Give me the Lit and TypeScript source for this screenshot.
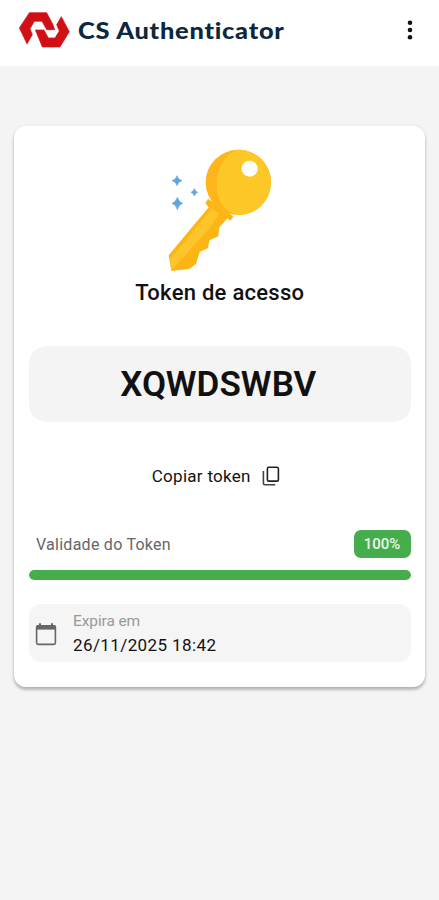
import { LitElement, html, css, svg } from "lit";
import { customElement, property } from "lit/decorators.js";

const logo = svg`<svg class="logo" viewBox="54 34 158 112" width="52.7" height="37.3">
  <path fill="#d11016" stroke="#d11016" stroke-width="2" stroke-linejoin="round" d="M81 133L58 85L88 39H140L159 75L164 90L140 90L126 65H103L90 87L97 105Z"/>
  <path fill="#d11016" stroke="#d11016" stroke-width="2" stroke-linejoin="round" d="M106 91H132L145 115H165L178 94L170 75L184 51L208 96L180 142H127Z"/>
</svg>`;

const key = svg`<svg class="key" viewBox="0 0 420 420" width="140" height="140">
  <path fill="#fdb515" d="M174 176L166 190L176 202L56 346L64 393L117 387L138 372L149 336L174 324L178 301L205 289L208 262L232 235L242 242L250 229Z"/>
  <path fill="#fcc52a" d="M186 205L208 221L176 268L82 371L64 391L60 358Z"/>
  <circle cx="265" cy="127" r="98" fill="#fdb51a"/>
  <path fill="#fcc727" d="M262 29C322 28 363 74 363 127C363 184 318 225 265 225C224 216 198 180 200 132C200 87 224 44 262 29Z"/>
  <circle cx="299" cy="86" r="24" fill="#fff"/>
  <path fill="#60a5df" stroke="#60a5df" stroke-width="2" stroke-linejoin="round" d="M81 107Q84 119 96 122Q84 125 81 137Q78 125 66 122Q78 119 81 107ZM133 146Q135 155 143 157Q135 159 133 168Q131 159 123 157Q131 155 133 146ZM82 172Q86 186 98 190Q86 194 82 209Q78 194 66 190Q78 186 82 172Z"/>
</svg>`;

const menuIcon = svg`<svg viewBox="0 0 8 24" width="8" height="24" fill="#111">
  <circle cx="4" cy="4.7" r="2.3"/><circle cx="4" cy="12" r="2.3"/><circle cx="4" cy="19.3" r="2.3"/>
</svg>`;

const copyIcon = svg`<svg class="copy-icon" viewBox="0 0 18 20" width="18" height="20" fill="none" stroke-width="1.6">
  <rect x="5.4" y="1.3" width="11" height="13.8" rx="1.4" stroke="#222"/>
  <path d="M1.4 5V17.2Q1.4 18.7 2.9 18.7H13.3" stroke="#444"/>
</svg>`;

const calendarIcon = svg`<svg class="calendar" viewBox="0 0 22 24" width="22" height="24">
  <path d="M5 1.2V4M17 1.2V4" stroke="#666" stroke-width="2"/>
  <rect x="1.6" y="3.7" width="18.8" height="18.7" rx="1.6" fill="none" stroke="#666" stroke-width="1.6"/>
  <path d="M1.6 3.4H20.4V7.6H1.6Z" fill="#666"/>
</svg>`;

@customElement("app-root")
export class AppRoot extends LitElement {
  @property() token = "XQWDSWBV";
  @property() expires = "26/11/2025 18:42";
  @property({ type: Number }) validity = 100;

  static styles = css`
    :host { display: block; min-height: 900px; background: #f4f4f4; font-family: Roboto, sans-serif; color: #111; }
    * { box-sizing: border-box; }
    svg { display: block; flex: none; }
    header { height: 66px; background: #fff; display: flex; align-items: center; padding: 0 25px 6px 18px; }
    .brand { margin: 0 auto 0 7px; font: 900 23.5px/30px Lato, sans-serif; color: #0b2840; letter-spacing: .7px; white-space: nowrap;
      transform: scaleX(1.08); transform-origin: left; }
    button { border: 0; padding: 0; background: none; font: inherit; color: inherit; }
    .card { margin: 60px 14px 0; height: 561px; background: #fff; border-radius: 12px; padding: 14px 14.5px 0 15px;
      box-shadow: 0 3px 3px rgba(0,0,0,.2), 0 1px 4px rgba(0,0,0,.12); display: flex; flex-direction: column; }
    .key { margin-left: 121px; }
    h1 { margin: -1px 0 0; font-size: 22px; line-height: 28px; font-weight: 500; text-align: center; letter-spacing: .27px; }
    .token { margin-top: 39px; height: 76px; border-radius: 18px; background: #f4f4f4; display: flex; align-items: center; justify-content: center;
      font-size: 35px; font-weight: 600; letter-spacing: .05px; padding: 1px 3px 0 0; }
    .copy { display: flex; align-items: center; justify-content: center; gap: 11px; margin-top: 40px; height: 28px; font-size: 17px; letter-spacing: .28px; padding-right: 8px; }
    .validity { display: flex; align-items: center; justify-content: space-between; height: 28px; margin-top: 40px; padding-left: 7px; font-size: 16px; letter-spacing: .26px; color: #666; }
    .badge { width: 57px; height: 28px; border-radius: 7px; background: #45ad4b; color: #eef9ee; font-size: 15px; font-weight: 500; letter-spacing: 0; display: grid; place-items: center; }
    .track { margin-top: 12px; height: 10px; border-radius: 5px; background: #e0e0e0; overflow: hidden; }
    .fill { height: 100%; border-radius: 5px; background: #45ad4b; }
    .expiry { margin-top: 24px; height: 58px; border-radius: 12px; background: #f5f5f5; display: flex; align-items: center; padding: 2px 0 0 6px; gap: 16px; }
    .label { font-size: 15.5px; line-height: 22px; color: #999; letter-spacing: -.1px; }
    .date { font-size: 17px; line-height: 27px; letter-spacing: .4px; }
  `;

  render() {
    return html`
      <header>
        ${logo}
        <div class="brand">CS Authenticator</div>
        <button aria-label="Menu">${menuIcon}</button>
      </header>
      <main class="card">
        ${key}
        <h1>Token de acesso</h1>
        <div class="token">${this.token}</div>
        <button class="copy"><span>Copiar token</span>${copyIcon}</button>
        <div class="validity"><span>Validade do Token</span><span class="badge">${this.validity}%</span></div>
        <div class="track"><div class="fill" style="width:${this.validity}%"></div></div>
        <section class="expiry">
          ${calendarIcon}
          <div><div class="label">Expira em</div><div class="date">${this.expires}</div></div>
        </section>
      </main>`;
  }
}
